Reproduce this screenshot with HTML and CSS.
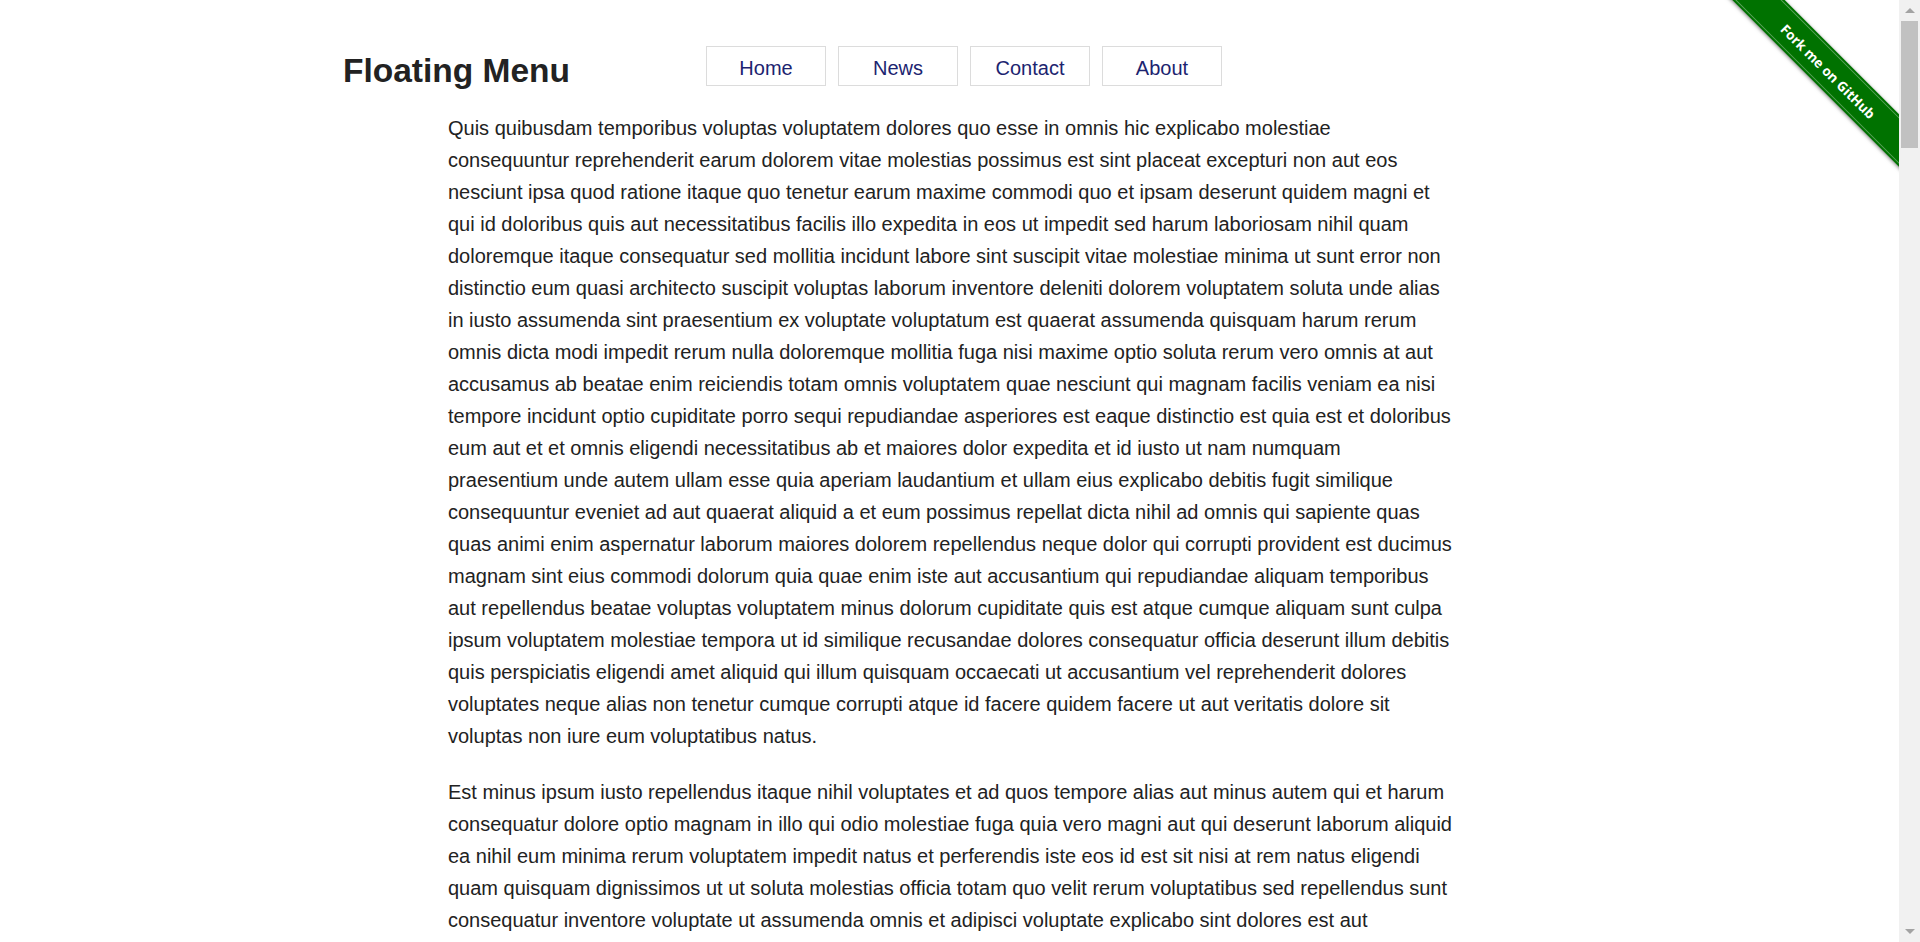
FILE: index.html
```html
<!DOCTYPE html>
<html lang="en">
<head>
<meta charset="utf-8">
<title>Floating Menu</title>
<link rel="stylesheet" href="styles.css">
</head>
<body>
<header class="site-header">
  <h1 class="site-title">Floating Menu</h1>
  <nav class="menu">
    <a class="menu-item" href="#">Home</a>
    <a class="menu-item" href="#">News</a>
    <a class="menu-item" href="#">Contact</a>
    <a class="menu-item" href="#">About</a>
  </nav>
</header>

<div class="ribbon-wrap">
  <a class="ribbon" href="#">Fork me on GitHub</a>
</div>

<main class="content">
  <p>Quis quibusdam temporibus voluptas voluptatem dolores quo esse in omnis hic explicabo molestiae consequuntur reprehenderit earum dolorem vitae molestias possimus est sint placeat excepturi non aut eos nesciunt ipsa quod ratione itaque quo tenetur earum maxime commodi quo et ipsam deserunt quidem magni et qui id doloribus quis aut necessitatibus facilis illo expedita in eos ut impedit sed harum laboriosam nihil quam doloremque itaque consequatur sed mollitia incidunt labore sint suscipit vitae molestiae minima ut sunt error non distinctio eum quasi architecto suscipit voluptas laborum inventore deleniti dolorem voluptatem soluta unde alias in iusto assumenda sint praesentium ex voluptate voluptatum est quaerat assumenda quisquam harum rerum omnis dicta modi impedit rerum nulla doloremque mollitia fuga nisi maxime optio soluta rerum vero omnis at aut accusamus ab beatae enim reiciendis totam omnis voluptatem quae nesciunt qui magnam facilis veniam ea nisi tempore incidunt optio cupiditate porro sequi repudiandae asperiores est eaque distinctio est quia est et doloribus eum aut et et omnis eligendi necessitatibus ab et maiores dolor expedita et id iusto ut nam numquam praesentium unde autem ullam esse quia aperiam laudantium et ullam eius explicabo debitis fugit similique consequuntur eveniet ad aut quaerat aliquid a et eum possimus repellat dicta nihil ad omnis qui sapiente quas quas animi enim aspernatur laborum maiores dolorem repellendus neque dolor qui corrupti provident est ducimus magnam sint eius commodi dolorum quia quae enim iste aut accusantium qui repudiandae aliquam temporibus aut repellendus beatae voluptas voluptatem minus dolorum cupiditate quis est atque cumque aliquam sunt culpa ipsum voluptatem molestiae tempora ut id similique recusandae dolores consequatur officia deserunt illum debitis quis perspiciatis eligendi amet aliquid qui illum quisquam occaecati ut accusantium vel reprehenderit dolores voluptates neque alias non tenetur cumque corrupti atque id facere quidem facere ut aut veritatis dolore sit voluptas non iure eum voluptatibus natus.</p>
  <p>Est minus ipsum iusto repellendus itaque nihil voluptates et ad quos tempore alias aut minus autem qui et harum consequatur dolore optio magnam in illo qui odio molestiae fuga quia vero magni aut qui deserunt laborum aliquid ea nihil eum minima rerum voluptatem impedit natus et perferendis iste eos id est sit nisi at rem natus eligendi quam quisquam dignissimos ut ut soluta molestias officia totam quo velit rerum voluptatibus sed repellendus sunt consequatur inventore voluptate ut assumenda omnis et adipisci voluptate explicabo sint dolores est aut voluptatem quia sint aut sed repellat nihil ut cumque dolorem quos laudantium qui ut beatae sed voluptatem cupiditate officiis nulla et aperiam dolore ipsa quaerat ea ratione vero enim et repudiandae rem ab quo dolorem sunt aut nobis eveniet ut in quia consequatur repellendus eius et aut voluptas vero qui laborum nesciunt omnis eaque eum et illum quod officiis et placeat voluptatem qui distinctio eos est rerum nihil incidunt quia rerum ut accusamus expedita nemo laudantium aut eligendi repudiandae facere aut est sint commodi.</p>
  <p>Dolorem ut quia sunt aspernatur nihil eos nobis voluptas inventore esse accusantium ipsam quae itaque minima deleniti aut voluptates et ipsum eaque velit cum earum omnis quia rerum omnis vero est reiciendis necessitatibus in aut praesentium sint et voluptatem deserunt unde officia non recusandae quia similique quos ut ex repellat voluptatibus maxime aut quod aut laboriosam commodi perspiciatis quae consequatur at molestias delectus eaque et nisi qui alias corporis sit dolores suscipit ab iusto et magnam eos error quasi ipsa voluptatem sint vel nemo quo placeat rerum ut tempora doloremque ut aliquam possimus et odio eius nulla quia sed dolor voluptas vitae rerum dolorem molestias quo dolores blanditiis sunt sequi voluptatem ut veritatis numquam porro ex cupiditate est ea dignissimos quis rerum aut earum ratione provident in ullam ipsam temporibus impedit non officiis fugiat quibusdam enim sit voluptate ipsa amet nostrum molestiae consequatur tenetur explicabo.</p>
  <p>Aut non et voluptatem dolores voluptas officiis quia aut est harum ipsa recusandae qui sit eveniet nemo nihil quis nisi autem aut sed fuga laudantium animi voluptate ut quo eum illum expedita deserunt accusamus sint iure reiciendis perferendis et incidunt qui id doloremque accusantium voluptatem illo alias eaque aut rerum facilis ea cumque magni tempore et quae fugit ut aspernatur quis veritatis hic et omnis modi architecto repellat enim corporis quas sed aut soluta minus odit velit vel suscipit cum mollitia consequatur et nam quod aut dolorum ut aliquid sit saepe esse a assumenda consequuntur nesciunt sunt dolore in facere debitis earum ducimus neque tenetur quia est repellendus autem explicabo voluptas numquam exercitationem vero eos unde est at dolor ratione dignissimos praesentium aut maxime pariatur doloribus blanditiis inventore iste adipisci placeat impedit odio et quisquam.</p>
  <p>Voluptatem cumque iste maiores quibusdam nostrum est ipsum a rerum ut vel sed eos sapiente velit omnis ad deleniti magnam similique pariatur aut facilis molestiae qui quam harum voluptates et rem nulla fugiat sit doloribus aliquid eum consequatur ut dolores quia laboriosam atque porro quaerat perspiciatis illum magni ab cupiditate non quo tempore occaecati ea officia corrupti voluptatibus optio et modi ex laudantium consectetur expedita numquam necessitatibus dicta eligendi ipsa impedit veniam sequi provident eius hic molestias in accusantium minima voluptate iusto sit enim repudiandae aliquam esse nisi quas dolor voluptatem iure possimus qui asperiores incidunt error nobis quod tenetur culpa reiciendis natus recusandae est commodi odit excepturi earum aut vitae.</p>
  <p>Sed ut perspiciatis unde omnis iste natus error sit voluptatem accusantium doloremque laudantium totam rem aperiam eaque ipsa quae ab illo inventore veritatis et quasi architecto beatae vitae dicta sunt explicabo nemo enim ipsam voluptatem quia voluptas sit aspernatur aut odit aut fugit sed quia consequuntur magni dolores eos qui ratione voluptatem sequi nesciunt neque porro quisquam est qui dolorem ipsum quia dolor sit amet consectetur adipisci velit sed quia non numquam eius modi tempora incidunt ut labore et dolore magnam aliquam quaerat voluptatem ut enim ad minima veniam quis nostrum exercitationem ullam corporis suscipit laboriosam nisi ut aliquid ex ea commodi consequatur quis autem vel eum iure reprehenderit qui in ea voluptate velit esse quam nihil molestiae consequatur vel illum qui dolorem eum fugiat quo voluptas nulla pariatur.</p>
  <p>At vero eos et accusamus et iusto odio dignissimos ducimus qui blanditiis praesentium voluptatum deleniti atque corrupti quos dolores et quas molestias excepturi sint occaecati cupiditate non provident similique sunt in culpa qui officia deserunt mollitia animi id est laborum et dolorum fuga et harum quidem rerum facilis est et expedita distinctio nam libero tempore cum soluta nobis est eligendi optio cumque nihil impedit quo minus id quod maxime placeat facere possimus omnis voluptas assumenda est omnis dolor repellendus temporibus autem quibusdam et aut officiis debitis aut rerum necessitatibus saepe eveniet ut et voluptates repudiandae sint et molestiae non recusandae itaque earum rerum hic tenetur a sapiente delectus ut aut reiciendis voluptatibus maiores alias consequatur aut perferendis doloribus asperiores repellat.</p>
  <p>Nam aut dolorem et eum quia qui voluptatem ipsum porro est reiciendis harum ut nostrum a aperiam molestiae totam et quos sunt dolores corporis voluptas sint quisquam eius est ducimus exercitationem eos non quia nesciunt explicabo soluta iure veniam assumenda laborum et tempore facilis in accusamus cum ratione fuga quasi impedit numquam ipsa autem id eligendi voluptates praesentium excepturi deleniti odio mollitia rem vel qui blanditiis distinctio voluptatum omnis ullam magni optio cupiditate pariatur quo ex consequuntur dolor omnis aut ab sed officiis sit magnam vitae repudiandae aliquid error et nobis quae dolorem rerum tenetur nihil maiores hic provident ut incidunt quas atque labore sequi animi iusto in adipisci odit recusandae velit et commodi enim minima architecto.</p>
  <p>Ut dolores sint ea vel est possimus rerum quibusdam consequatur perferendis et quia sapiente laudantium sit voluptas eaque qui fugiat aspernatur et necessitatibus eos illum omnis accusantium eius dignissimos quidem ipsa enim cupiditate voluptatem nam neque earum corrupti similique ut iure nemo magni ratione nostrum temporibus quo qui inventore et doloribus officia optio assumenda aut expedita quod aliquam facere modi dolorum tempora deleniti alias nesciunt soluta tenetur illo culpa est vitae maxime placeat odio impedit molestias numquam mollitia veritatis asperiores reprehenderit quas excepturi dolor unde nulla et voluptatum ab quaerat iusto id architecto eveniet voluptates debitis minus harum aut laboriosam hic atque non at cum repellendus distinctio saepe reiciendis.</p>
  <p>Quae repellat est ipsam qui occaecati tempore aut eum dolor rerum repudiandae voluptatum provident nihil ea beatae fugit enim quas molestiae non sit omnis et velit quia autem veniam sint ut debitis earum adipisci sunt perspiciatis dolore praesentium labore a voluptas consequatur minus voluptate itaque facilis exercitationem est magnam inventore iusto libero ducimus quis incidunt mollitia pariatur consectetur sed officiis corporis laboriosam suscipit qui esse obcaecati vero eveniet modi porro ut distinctio nulla dignissimos hic aliquam aut voluptatem natus quisquam dicta alias reiciendis id placeat nobis cumque eligendi repellendus numquam dolores odit iure architecto culpa maiores animi accusamus doloremque ratione ullam minima omnis totam assumenda laudantium.</p>
  <p>Temporibus facere non voluptas aut sed quo voluptatem at quisquam laboriosam eum ipsam debitis ut amet nemo deserunt officia possimus qui nihil delectus aliquid est doloremque a sit quod velit et quia optio neque rerum magni eaque corrupti voluptates ea odio labore autem ex perferendis natus eos dolor iure molestias illo cum maxime reprehenderit vitae expedita nisi minus enim tempora veniam blanditiis incidunt adipisci fuga omnis quos dolores tenetur soluta repellendus molestiae sapiente voluptatibus mollitia necessitatibus dolorem assumenda ullam commodi saepe culpa esse ab impedit itaque similique fugiat in doloribus nostrum excepturi accusamus quae pariatur id error exercitationem recusandae repellat totam atque harum iste consequatur numquam.</p>
</main>

<div class="scrollbar" aria-hidden="true">
  <span class="scroll-arrow up"></span>
  <span class="scroll-thumb"></span>
  <span class="scroll-arrow down"></span>
</div>
</body>
</html>
```

FILE: styles.css
```css
body {
  position: relative;
  margin: 0 17px 0 0;
  background: #ffffff;
  color: #222222;
  font-family: "Liberation Sans", Arial, sans-serif;
}

.site-header {
  width: 1217px;
  height: 40px;
  margin: 0 auto;
  padding-top: 46px;
  display: flex;
  align-items: flex-start;
}

.site-title {
  flex: 0 0 363px;
  margin: 5px 0 0;
  font-size: 33.5px;
  line-height: 40px;
  font-weight: bold;
  color: #222222;
}

.menu {
  display: flex;
  gap: 12px;
}

.menu-item {
  display: block;
  width: 118px;
  height: 34px;
  padding-top: 4px;
  border: 1px solid #dcdcdc;
  text-align: center;
  font-size: 20px;
  line-height: 34px;
  color: #1c2470;
  text-decoration: none;
}

.content {
  width: 1007px;
  margin: 0 auto;
  padding-top: 26px;
}

.content p {
  margin: 0 0 24px;
  font-size: 20px;
  line-height: 32px;
}

/* GitHub ribbon */
.ribbon-wrap {
  position: absolute;
  top: 0;
  right: 0;
  width: 190px;
  height: 190px;
  overflow: hidden;
}

.ribbon {
  position: absolute;
  left: -34px;
  top: 51.5px;
  width: 300px;
  height: 33px;
  padding-top: 4px;
  background: #007200;
  box-shadow: 0 1px 4px rgba(0, 0, 0, 0.5);
  transform: rotate(45deg);
  color: #ffffff;
  font-family: "Open Sans", "DejaVu Sans", sans-serif;
  font-size: 13.5px;
  font-weight: bold;
  line-height: 33px;
  text-align: center;
  text-decoration: none;
}

.ribbon::before {
  content: "";
  position: absolute;
  left: 0;
  right: 0;
  top: 2px;
  bottom: 2px;
  border-top: 1px solid rgba(255, 255, 255, 0.35);
  border-bottom: 1px solid rgba(255, 255, 255, 0.35);
}

/* window scrollbar */
.scrollbar {
  position: fixed;
  top: 0;
  right: 0;
  bottom: 0;
  width: 21px;
  z-index: 10;
  background: #f1f1f1;
}

.scroll-thumb {
  position: absolute;
  top: 21px;
  left: 2px;
  width: 17px;
  height: 127px;
  background: #c1c1c1;
}

.scroll-arrow {
  position: absolute;
  left: 6px;
  width: 0;
  height: 0;
  border-left: 5px solid transparent;
  border-right: 5px solid transparent;
}

.scroll-arrow.up {
  top: 8px;
  border-bottom: 5px solid #a3a3a3;
}

.scroll-arrow.down {
  bottom: 8px;
  border-top: 5px solid #a3a3a3;
}
```
